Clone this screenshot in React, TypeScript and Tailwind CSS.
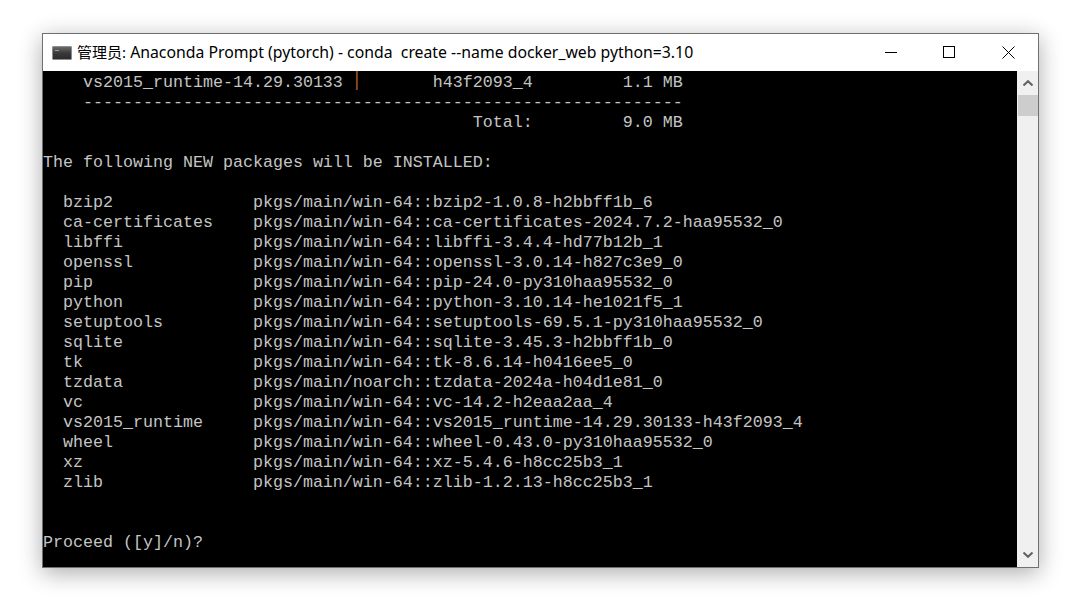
const lines = [
  "    ------------------------------------------------------------",
  "                                           Total:         9.0 MB",
  "",
  "The following NEW packages will be INSTALLED:",
  "",
  "  bzip2              pkgs/main/win-64::bzip2-1.0.8-h2bbff1b_6",
  "  ca-certificates    pkgs/main/win-64::ca-certificates-2024.7.2-haa95532_0",
  "  libffi             pkgs/main/win-64::libffi-3.4.4-hd77b12b_1",
  "  openssl            pkgs/main/win-64::openssl-3.0.14-h827c3e9_0",
  "  pip                pkgs/main/win-64::pip-24.0-py310haa95532_0",
  "  python             pkgs/main/win-64::python-3.10.14-he1021f5_1",
  "  setuptools         pkgs/main/win-64::setuptools-69.5.1-py310haa95532_0",
  "  sqlite             pkgs/main/win-64::sqlite-3.45.3-h2bbff1b_0",
  "  tk                 pkgs/main/win-64::tk-8.6.14-h0416ee5_0",
  "  tzdata             pkgs/main/noarch::tzdata-2024a-h04d1e81_0",
  "  vc                 pkgs/main/win-64::vc-14.2-h2eaa2aa_4",
  "  vs2015_runtime     pkgs/main/win-64::vs2015_runtime-14.29.30133-h43f2093_4",
  "  wheel              pkgs/main/win-64::wheel-0.43.0-py310haa95532_0",
  "  xz                 pkgs/main/win-64::xz-5.4.6-h8cc25b3_1",
  "  zlib               pkgs/main/win-64::zlib-1.2.13-h8cc25b3_1",
  "",
  "",
  "Proceed ([y]/n)?",
];

export default function App() {
  return (
    <div className="w-[1073px] h-[600px] bg-white overflow-hidden pt-[33px] pl-[42px]">
      <div className="w-[997px] h-[535px] flex flex-col border border-[#707070] bg-white shadow-[0_5px_22px_rgba(0,0,0,0.33)]">
        <div className="h-[37px] shrink-0 flex items-center bg-white">
          <div className="w-[20px] h-[14px] ml-[9px] mr-[5px] rounded-[1px] bg-gradient-to-b from-[#6a6a6a] via-[#3a3a3a] to-[#2c2c2c] border border-[#8c8c8c] flex items-start">
            <span className="block w-[4px] h-[1px] mt-[3px] ml-[2px] bg-[#9a9a9a]" />
          </div>
          <span className="flex-1 text-[15.8px] text-black whitespace-nowrap font-['Noto_Sans','Noto_Sans_CJK_SC',sans-serif]">
            <span className="text-[15px]">管理员:</span> Anaconda Prompt (pytorch) - conda&nbsp; create --name docker_web python=3.10
          </span>
          <div className="flex items-center h-full pb-[1px] pr-[1px]">
            <button className="w-[56px] h-full flex items-center justify-center">
              <span className="block w-[12px] h-[1px] bg-black" />
            </button>
            <button className="w-[60px] h-full flex items-center justify-center">
              <span className="block w-[12px] h-[12px] border border-black" />
            </button>
            <button className="w-[58px] h-full flex items-center justify-center">
              <svg width="13" height="13" viewBox="0 0 13 13" fill="none" stroke="black" strokeWidth="1">
                <path d="M0.5 0.5 L12.5 12.5 M12.5 0.5 L0.5 12.5" />
              </svg>
            </button>
          </div>
        </div>
        <div className="flex-1 flex min-h-0">
          <div className="w-[974px] bg-black text-[#c4c4c4] font-['Liberation_Mono',monospace] text-[16.67px] leading-[20px] whitespace-pre">
            <div className="h-[22px] flex items-start">
              <span className="mt-[2px]">{"    vs2015_runtime-14.29.30133 "}</span>
              <span className="block w-[10px] -ml-[1px] text-center scale-y-[1.25] text-[#b0602a]">|</span>
              <span className="mt-[2px] ml-[1px]">{"       h43f2093_4         1.1 MB"}</span>
            </div>
            {lines.map((l, i) => (
              <div key={i} className="h-[20px]">{l}</div>
            ))}
          </div>
          <div className="flex-1 bg-[#f0f0f0] flex flex-col">
            <div className="h-[24px] flex items-center justify-center">
              <svg width="10" height="6" viewBox="0 0 10 6" fill="none" stroke="#606060" strokeWidth="2">
                <path d="M0.5 5.5 L5 1.2 L9.5 5.5" />
              </svg>
            </div>
            <div className="h-[21px] ml-[1px] bg-[#cdcdcd]" />
            <div className="flex-1" />
            <div className="h-[24px] flex items-center justify-center">
              <svg width="10" height="6" viewBox="0 0 10 6" fill="none" stroke="#606060" strokeWidth="2">
                <path d="M0.5 0.5 L5 4.8 L9.5 0.5" />
              </svg>
            </div>
          </div>
        </div>
      </div>
    </div>
  );
}
